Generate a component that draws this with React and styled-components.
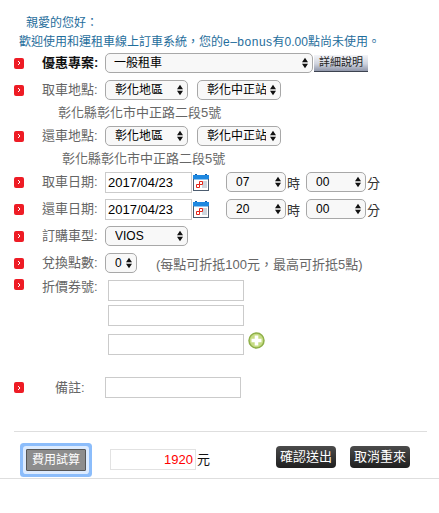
import React from "react";
import styled, { createGlobalStyle } from "styled-components";

const Global = createGlobalStyle`
  html, body { margin: 0; padding: 0; background: #fff; }
  body { font-family: "Liberation Sans", "Noto Sans CJK TC", sans-serif; font-size: 13px; color: #666; }
`;

const Page = styled.div`
  width: 439px;
  height: 513px;
  overflow: hidden;
  padding-top: 14px;
  box-sizing: border-box;
`;

const Greeting = styled.div`
  padding-left: ${(p) => p.$left}px;
  margin-bottom: ${(p) => p.$bottom || 0}px;
  height: 19px;
  line-height: 19px;
  font-size: 12px;
  color: #1f6e9c;
  white-space: nowrap;
`;

const Bonus = styled.span`
  letter-spacing: 0.5px;
`;

const Row = styled.div`
  display: flex;
  align-items: ${(p) => (p.$top ? "flex-start" : "center")};
  height: ${(p) => p.$height || 20}px;
  margin-top: ${(p) => p.$gap || 0}px;
  padding-left: 14px;
`;

const Bullet = styled.span`
  flex: none;
  width: 10px;
  height: 11px;
  border-radius: 2px;
  background: #ee1c25;
  display: flex;
  align-items: center;
  justify-content: center;
  margin-top: ${(p) => p.$shift || 0}px;
`;

const Label = styled.label`
  flex: none;
  box-sizing: border-box;
  width: 63px;
  margin-left: 18px;
  padding-left: ${(p) => p.$indent || 0}px;
  margin-top: ${(p) => p.$shift || 0}px;
  font-size: 13px;
  line-height: 20px;
  font-weight: ${(p) => (p.$strong ? 700 : 400)};
  color: ${(p) => (p.$strong ? "#111" : "#666")};
  white-space: nowrap;
`;

const SelectBox = styled.span`
  position: relative;
  flex: none;
  display: block;
  width: ${(p) => p.$width}px;
  height: 20px;
  margin-left: ${(p) => p.$left || 0}px;
`;

const NativeSelect = styled.select`
  appearance: none;
  width: 100%;
  height: 100%;
  box-sizing: border-box;
  margin: 0;
  padding: 0 14px 0 ${(p) => p.$pad || 9}px;
  border: 1px solid #a8a8a8;
  border-radius: 5px;
  background: #f8f8f8;
  font: 12px "Liberation Sans", "Noto Sans CJK TC", sans-serif;
  color: #000;
`;

const Arrows = styled.svg`
  position: absolute;
  right: 5px;
  top: 4px;
  width: 6px;
  height: 12px;
  pointer-events: none;
`;

const Field = styled.input`
  flex: none;
  box-sizing: border-box;
  width: ${(p) => p.$width || 136}px;
  height: 21px;
  margin: 0 0 0 ${(p) => p.$left || 0}px;
  padding: 0 2px;
  border: 1px solid #cbcbcb;
  background: #fff;
  font: 13px "Liberation Sans", "Noto Sans CJK TC", sans-serif;
  color: #000;
  outline: none;
`;

const DetailButton = styled.button`
  flex: none;
  width: 54px;
  height: 17px;
  margin-left: 1px;
  padding: 0;
  border: 0;
  border-bottom: 1px solid #3d4350;
  background: linear-gradient(#f4f5f8 0%, #cfd3de 55%, #8f96aa 100%);
  font: 11px/15px "Liberation Sans", "Noto Sans CJK TC", sans-serif;
  color: #222;
`;

const Address = styled.div`
  height: 26px;
  line-height: 26px;
  padding-left: ${(p) => p.$left}px;
  font-size: 13px;
  color: #666;
  white-space: nowrap;
`;

const Unit = styled.span`
  flex: none;
  width: ${(p) => p.$width || 13}px;
  margin-left: 1px;
  font-size: 13px;
  color: #333;
`;

const Note = styled.span`
  margin-left: 19px;
  font-size: 13px;
  color: #666;
  white-space: nowrap;
`;

const CouponList = styled.div`
  display: flex;
  flex-direction: column;
  margin-left: 3px;
`;

const CouponLine = styled.div`
  display: flex;
  align-items: flex-start;
  margin-top: ${(p) => p.$gap || 0}px;
`;

const PlusIcon = styled.svg`
  width: 17px;
  height: 17px;
  margin-left: 4px;
  margin-top: -2px;
`;

const Divider = styled.div`
  height: 1px;
  background: #dedede;
  margin: ${(p) => p.$top}px ${(p) => p.$right}px 0 ${(p) => p.$left}px;
`;

const Footer = styled.div`
  display: flex;
  align-items: flex-start;
  height: 46px;
  box-sizing: border-box;
  padding: 14px 0 0 26px;
`;

const CalcButton = styled.button`
  flex: none;
  width: 60px;
  height: 22px;
  margin-top: 3px;
  padding: 0;
  border: 1px solid #555;
  border-radius: 1px;
  background: #8d8d8d;
  box-shadow: 0 0 0 3px #dcebff, 0 0 0 6px #8cbdfb;
  font: 12px/20px "Liberation Sans", "Noto Sans CJK TC", sans-serif;
  color: #fff;
`;

const Total = styled.input`
  flex: none;
  box-sizing: border-box;
  width: 86px;
  height: 21px;
  margin: 3px 0 0 24px;
  padding: 0 2px;
  border: 1px solid #e2e2e2;
  background: #fff;
  text-align: right;
  font: 13px "Liberation Sans", sans-serif;
  color: #f00;
  outline: none;
`;

const Yuan = styled.span`
  flex: none;
  width: 79px;
  margin-left: 1px;
  margin-top: 5px;
  font-size: 13px;
  line-height: 18px;
  color: #111;
`;

const DarkButton = styled.button`
  flex: none;
  width: 60px;
  height: 22px;
  margin-left: ${(p) => p.$left || 0}px;
  padding: 0;
  border: 0;
  border-radius: 4px;
  background: linear-gradient(#4b4b4b, #1f1f1f);
  font: 13px/22px "Liberation Sans", "Noto Sans CJK TC", sans-serif;
  color: #fff;
`;

function Mark({ shift }) {
  return (
    <Bullet $shift={shift}>
      <svg width="4" height="6" viewBox="0 0 4 6">
        <path d="M1 1l2 2-2 2" fill="none" stroke="#fff" strokeWidth="1" />
      </svg>
    </Bullet>
  );
}

function Select({ width, left, pad, value }) {
  return (
    <SelectBox $width={width} $left={left}>
      <NativeSelect $pad={pad} defaultValue={value}>
        <option>{value}</option>
      </NativeSelect>
      <Arrows viewBox="0 0 7 12">
        <path d="M3.5 0L7 5H0zM3.5 12L0 7h7z" fill="#111" />
      </Arrows>
    </SelectBox>
  );
}

function CalendarIcon() {
  return (
    <svg width="16" height="17" viewBox="0 0 16 17" style={{ marginLeft: 1, flex: "none" }}>
      <rect x="0.5" y="1.5" width="15" height="15" fill="#fff" stroke="#4d5d70" />
      <rect x="0" y="1" width="16" height="4" fill="#1e88e0" />
      <path d="M2 0.5h2M12 0.5h2" stroke="#0f5fb0" />
      <path d="M1 5.5h14" stroke="#8fc4ef" />
      <rect x="9" y="7" width="5" height="7" fill="#cfd6de" />
      <path d="M3.5 10.5h3v3h-3zM6.5 7.5h3v3h-3z" fill="#fff" stroke="#e3261b" />
    </svg>
  );
}

function DateRow({ label, gap, hour }) {
  return (
    <Row $gap={gap}>
      <Mark />
      <Label>{label}</Label>
      <Field $width={87} defaultValue="2017/04/23" />
      <CalendarIcon />
      <Select width={60} left={17} value={hour} />
      <Unit $width={19}>時</Unit>
      <Select width={60} value="00" />
      <Unit>分</Unit>
    </Row>
  );
}

export default function App() {
  return (
    <Page>
      <Global />
      <Greeting $left={26}>親愛的您好：</Greeting>
      <Greeting $left={19} $bottom={1}>
        歡迎使用和運租車線上訂車系統，您的<Bonus>e–bonus</Bonus>有0.00點尚未使用。
      </Greeting>
      <Row>
        <Mark />
        <Label $strong>優惠專案:</Label>
        <Select width={208} pad={8} value="一般租車" />
        <DetailButton>詳細說明</DetailButton>
      </Row>
      <Row $gap={7}>
        <Mark />
        <Label>取車地點:</Label>
        <Select width={83} value="彰化地區" />
        <Select width={84} left={9} value="彰化中正站" />
      </Row>
      <Address $left={58}>彰化縣彰化市中正路二段5號</Address>
      <Row>
        <Mark />
        <Label>還車地點:</Label>
        <Select width={83} value="彰化地區" />
        <Select width={84} left={9} value="彰化中正站" />
      </Row>
      <Address $left={62}>彰化縣彰化市中正路二段5號</Address>
      <DateRow label="取車日期:" hour="07" />
      <DateRow label="還車日期:" hour="20" gap={7} />
      <Row $gap={7}>
        <Mark />
        <Label>訂購車型:</Label>
        <Select width={83} value="VIOS" />
      </Row>
      <Row $gap={7}>
        <Mark />
        <Label>兌換點數:</Label>
        <Select width={32} value="0" />
        <Note>(每點可折抵100元，最高可折抵5點)</Note>
      </Row>
      <Row $top $height={75} $gap={7}>
        <Mark shift={-1} />
        <Label $shift={-3}>折價券號:</Label>
        <CouponList>
          <Field />
          <CouponLine $gap={4}>
            <Field />
          </CouponLine>
          <CouponLine $gap={8}>
            <Field />
            <PlusIcon viewBox="0 0 17 17">
              <circle cx="8.5" cy="8.5" r="7.5" fill="#c6dc84" stroke="#8fb04a" strokeWidth="1.5" />
              <path d="M8.5 3.5v10M3.5 8.5h10" stroke="#fff" strokeWidth="3.6" />
            </PlusIcon>
          </CouponLine>
        </CouponList>
      </Row>
      <Row $height={21} $gap={22}>
        <Mark />
        <Label $indent={13}>備註:</Label>
        <Field />
      </Row>
      <Divider $top={33} $left={14} $right={12} />
      <Footer>
        <CalcButton>費用試算</CalcButton>
        <Total defaultValue="1920" />
        <Yuan>元</Yuan>
        <DarkButton>確認送出</DarkButton>
        <DarkButton $left={14}>取消重來</DarkButton>
      </Footer>
      <Divider $top={0} $left={0} $right={0} />
    </Page>
  );
}
